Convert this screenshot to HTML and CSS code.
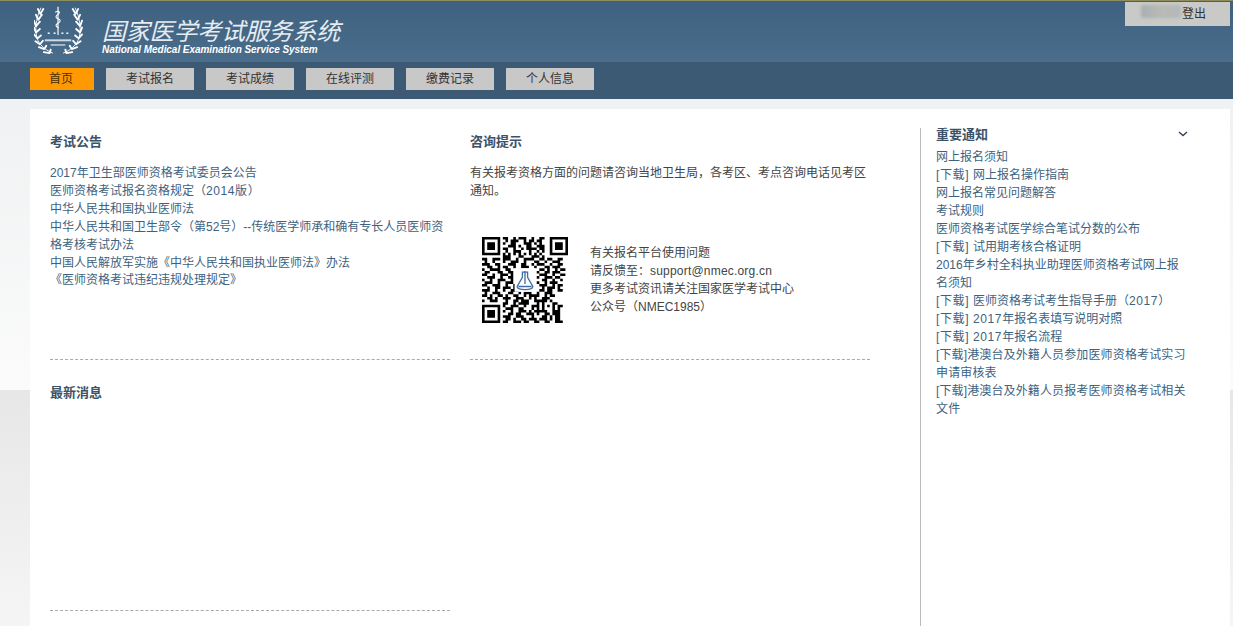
FILE: index.html
```html
<!DOCTYPE html>
<html lang="zh-CN">
<head>
<meta charset="utf-8">
<title>国家医学考试服务系统</title>
<link rel="stylesheet" href="styles.css">
</head>
<body>
<div class="page">
  <header class="masthead">
    <svg class="logo" viewBox="0 0 50 52" aria-hidden="true">
      <defs>
        <g id="branch" fill="none" stroke="#fff" stroke-linecap="round" stroke-linejoin="round">
          <path d="M7 2C2 12 0 26 4 35c3 6 8 10 15 13" stroke-width=".9"/>
          <path d="M4 3l2.500 5 3-5M2 9l2.500 5 3.500-5M0 15l2 5.500 4-4.500M0 22l2 5 4-3.500M0 29l3.500 4 3.500-3M1.500 36l4.500 3 3-3.500M5 42l5.500 2 2-3.500M10 47l6 1 1-3.500" stroke-width="1.900"/>
        </g>
      </defs>
      <use href="#branch"/>
      <use href="#branch" transform="matrix(-1 0 0 1 49 0)"/>
      <g fill="none" stroke="#fff" stroke-linecap="round">
        <path d="M24.500 1v28" stroke-width="1.200"/>
        <path d="M22 6c4-2 5 1 2.500 2.500s-3 3.500 0 4.500 3 3 0 4.500-2.500 3.500 0 4.500" stroke-width="1.100"/>
      </g>
      <g fill="#fff">
        <rect x="14" y="27" width="2" height="1.500"/><rect x="20" y="27" width="2" height="1.500"/><rect x="28" y="27" width="2" height="1.500"/><rect x="33" y="27" width="2" height="1.500"/>
        <rect x="11" y="34" width="27" height="2" opacity=".75"/>
        <rect x="17" y="39" width="15" height="1.500" opacity=".7"/>
      </g>
    </svg>
    <div class="brand">
      <div class="brand-cn">国家医学考试服务系统</div>
      <div class="brand-en">National Medical Examination Service System</div>
    </div>
    <div class="account"><span class="account-name"></span><a class="logout">登出</a></div>
  </header>
  <nav class="nav">
    <a class="nav-item nav-home">首页</a>
    <a class="nav-item">考试报名</a>
    <a class="nav-item">考试成绩</a>
    <a class="nav-item">在线评测</a>
    <a class="nav-item">缴费记录</a>
    <a class="nav-item">个人信息</a>
  </nav>
  <main class="main">
    <div class="board">
      <section class="panel">
        <h2 class="panel-title">考试公告</h2>
        <ul class="links board-links">
          <li>2017年卫生部医师资格考试委员会公告</li>
          <li>医师资格考试报名资格规定（<span class="wide">2014版</span>）</li>
          <li>中华人民共和国执业医师法</li>
          <li>中华人民共和国卫生部令（第52号）--传统医学师承和确有专长人员医师资格考核考试办法</li>
          <li>中国人民解放军实施《中华人民共和国执业医师法》办法</li>
          <li>《医师资格考试违纪违规处理规定》</li>
        </ul>
      </section>
      <section class="panel">
        <h2 class="panel-title">咨询提示</h2>
        <p class="hint">有关报考资格方面的问题请咨询当地卫生局，各考区、考点咨询电话见考区通知。</p>
        <div class="contact">
          <svg class="qr" viewBox="0 0 33 33" aria-hidden="true">
            <path fill-rule="evenodd" d="M0 0h7v7h-7zM1 1v5h5v-5zM2 2h3v3h-3zM26 0h7v7h-7zM27 1v5h5v-5zM28 2h3v3h-3zM0 26h7v7h-7zM1 27v5h5v-5zM2 28h3v3h-3z"/>
            <path fill="none" stroke="#000" d="M8 .5h2m2 0h1m1 0h3m2 0h1m2 0h2M9 1.500h1m1 0h3m2 0h1m1 0h2m1 0h2M8 2.500h1m2 0h2m3 0h3m1 0h1m1 0h1M10 3.500h3m1 0h1m2 0h2m2 0h3M8 4.500h2m2 0h1m2 0h1m1 0h4m1 0h2M9 5.500h1m2 0h3m3 0h1m2 0h1m1 0h1M8 6.500h1m1 0h1m1 0h1m1 0h1m1 0h1m1 0h1m1 0h1m1 0h1M8 7.500h3m3 0h2m3 0h3m1 0h1M0 8.500h2m2 0h3m1 0h3m2 0h1m2 0h4m2 0h2m1 0h2m2 0h2M1 9.500h1m2 0h1m3 0h1m2 0h3m2 0h1m3 0h2m2 0h1m2 0h3M0 10.500h3m2 0h2m3 0h3m2 0h2m2 0h1m1 0h3m2 0h1m2 0h2M2 11.500h2m2 0h1m1 0h2m2 0h1m2 0h3m2 0h1m3 0h2m1 0h3M0 12.500h1m2 0h4m2 0h2m11 0h2m1 0h1m2 0h1m1 0h2M1 13.500h2m3 0h2m2 0h2m9 0h1m2 0h2m1 0h3M0 14.500h2m2 0h1m2 0h3m1 0h1m10 0h3m2 0h1m2 0h2M2 15.500h3m2 0h1m2 0h2m9 0h1m2 0h3m1 0h2M0 16.500h1m2 0h1m2 0h3m2 0h1m11 0h2m2 0h1m2 0h1M1 17.500h3m2 0h1m2 0h3m9 0h1m2 0h1m1 0h3M0 18.500h2m2 0h3m2 0h1m2 0h1m9 0h3m2 0h1m1 0h2M2 19.500h1m2 0h2m1 0h3m1 0h1m10 0h1m1 0h3m1 0h1M0 20.500h3m2 0h1m2 0h1m2 0h3m8 0h2m1 0h2m2 0h2M1 21.500h1m2 0h3m3 0h2m2 0h1m1 0h3m2 0h1m2 0h3M0 22.500h2m1 0h1m2 0h2m1 0h1m2 0h2m2 0h1m1 0h4m2 0h1m1 0h2M2 23.500h2m1 0h1m2 0h3m2 0h3m2 0h1m1 0h1m2 0h3M0 24.500h1m2 0h3m3 0h1m2 0h2m1 0h3m2 0h5m1 0h1M8 25.500h2m2 0h1m1 0h4m3 0h1m1 0h1m3 0h2M8 26.500h1m2 0h3m2 0h1m2 0h3m1 0h1m1 0h1m1 0h1m1 0h2M9 27.500h3m2 0h2m3 0h1m1 0h1m1 0h1m3 0h1m1 0h1M8 28.500h1m2 0h1m2 0h3m1 0h1m1 0h5m2 0h3M10 29.500h2m1 0h2m2 0h3m1 0h1m2 0h2m1 0h3M8 30.500h3m2 0h3m3 0h1m3 0h2m1 0h1m1 0h2M9 31.500h2m1 0h1m2 0h2m1 0h3m1 0h3m1 0h1m1 0h2M8 32.500h2m2 0h3m1 0h2m2 0h2m2 0h2m2 0h3"/>
            <rect x="12.500" y="12" width="8" height="9" fill="#fff"/>
            <path fill="none" stroke="#3f6fa8" stroke-width=".5" d="M15.500 13.500h2v2l2 3.500c0 1-1 1.200-3 1.200s-3-.2-3-1.200l2-3.500zM16.500 13v5M14 19h5"/>
          </svg>
          <div class="contact-text">
            <div>有关报名平台使用问题</div>
            <div>请反馈至：<span class="mail">support@nmec.org.cn</span></div>
            <div>更多考试资讯请关注国家医学考试中心</div>
            <div>公众号（NMEC1985）</div>
          </div>
        </div>
      </section>
      <section class="panel">
        <h2 class="panel-title">最新消息</h2>
      </section>
    </div>
    <aside class="side">
      <div class="side-head">
        <h2 class="side-title">重要通知</h2>
        <svg class="chevron" viewBox="0 0 10 6" aria-hidden="true"><path d="M1 1l4 3.500L9 1" fill="none" stroke="#2f4558" stroke-width="1.400"/></svg>
      </div>
      <ul class="links side-links">
        <li>网上报名须知</li>
        <li><span class="tag">[下载] </span>网上报名操作指南</li>
        <li>网上报名常见问题解答</li>
        <li>考试规则</li>
        <li>医师资格考试医学综合笔试分数的公布</li>
        <li><span class="tag">[下载] </span>试用期考核合格证明</li>
        <li>2016年乡村全科执业助理医师资格考试网上报名须知</li>
        <li><span class="tag">[下载] </span>医师资格考试考生指导手册（<span class="wide">2017</span>）</li>
        <li><span class="tag">[下载] </span><span class="wide">2017</span>年报名表填写说明对照</li>
        <li><span class="tag">[下载] </span><span class="wide">2017</span>年报名流程</li>
        <li class="spaced">[下载]港澳台及外籍人员参加医师资格考试实习申请审核表</li>
        <li class="spaced">[下载]港澳台及外籍人员报考医师资格考试相关文件</li>
      </ul>
    </aside>
  </main>
</div>
</body>
</html>
```

FILE: styles.css
```css
* { box-sizing: border-box; }
html, body { margin: 0; height: 100%; overflow: hidden; }
body {
  font: 12px/18px "Liberation Sans", "Noto Sans CJK SC", sans-serif;
  color: #444;
}
.page {
  height: 626px;
  display: flex;
  flex-direction: column;
  background: linear-gradient(#eff1f2 0, #fbfbfb 291px, #e7e7e7 291px, #f5f5f5 100%) no-repeat 0 99px / 100% 527px;
}
.masthead {
  height: 62px;
  flex: none;
  display: flex;
  align-items: flex-start;
  padding-left: 34px;
  border-top: 1px solid #8c8c5c;
  background: linear-gradient(#3f6180, #4a6d8c);
}
.logo { width: 49px; height: 51px; margin-top: 5px; flex: none; }
.brand { margin-left: 19px; padding-top: 16px; color: #fff; }
.brand-cn {
  font-size: 24px;
  line-height: 30px;
  font-style: italic;
  font-weight: 400;
  letter-spacing: -.2px;
  color: #e6ecf1;
  white-space: nowrap;
}
.brand-en {
  font-size: 10px;
  line-height: 10px;
  font-weight: 700;
  font-style: italic;
  letter-spacing: -.05px;
  margin-top: -2px;
  white-space: nowrap;
}
.account {
  margin: 1px 3px 0 auto;
  width: 105px;
  height: 24px;
  background: #c9c9c7;
  display: flex;
  align-items: center;
  padding-left: 16px;
  color: #333;
}
.account-name {
  width: 40px;
  height: 13px;
  margin: -5px 1px 0 0;
  border-radius: 3px;
  background: linear-gradient(90deg, #a9afb4, #b8bab4 50%, #b4b8bc);
  filter: blur(1.5px);
}
.logout { font-size: 12px; }
.nav {
  height: 37px;
  flex: none;
  display: flex;
  gap: 12px;
  padding: 6px 0 0 30px;
  background: #3c5a74;
}
.nav-item {
  width: 88px;
  height: 22px;
  line-height: 22px;
  text-align: center;
  background: #c8c8c8;
  color: #333;
}
.nav-home { width: 64px; padding-right: 2px; background: #ff9900; color: #4a3000; }
.main {
  flex: 1;
  min-height: 0;
  margin: 10px 3px 0 30px;
  padding-left: 20px;
  background: #fff;
  display: flex;
}
.board {
  width: 870px;
  flex: none;
  display: grid;
  grid-template-columns: 400px 400px;
  column-gap: 20px;
  grid-auto-rows: 251px;
}
.panel { padding-top: 24px; border-bottom: 1px dashed #aaa; }
.panel-title {
  margin: 0 0 14px;
  font-size: 13px;
  line-height: 18px;
  font-weight: 700;
  color: #3b5268;
}
.links { list-style: none; margin: 0; padding: 0; color: #3d6280; }
.links li { width: 400px; }
.board-links { line-height: 17.9px; }
.wide { letter-spacing: .6px; }
.tag { letter-spacing: .6px; }
.hint { margin: -1px 0 0; width: 400px; }
.contact { display: flex; align-items: center; margin-top: 37px; padding-left: 12px; }
.qr { width: 86px; height: 86px; flex: none; }
.contact-text { margin-left: 22px; white-space: nowrap; }
.mail { letter-spacing: .2px; }
.side {
  margin-top: 19px;
  padding-left: 15px;
  border-left: 1px solid #bbb;
  flex: none;
  width: 280px;
}
.side-head {
  width: 254px;
  height: 14px;
  display: flex;
  justify-content: space-between;
  align-items: center;
}
.side-title {
  margin: 0;
  font-size: 13px;
  line-height: 14px;
  font-weight: 700;
  color: #3b5268;
}
.chevron { width: 10px; height: 6px; margin: -2px 2px 0 0; }
.side-links { margin-top: 6px; }
.side-links li { width: 250px; }
.side-links .spaced { letter-spacing: .13px; }
```
